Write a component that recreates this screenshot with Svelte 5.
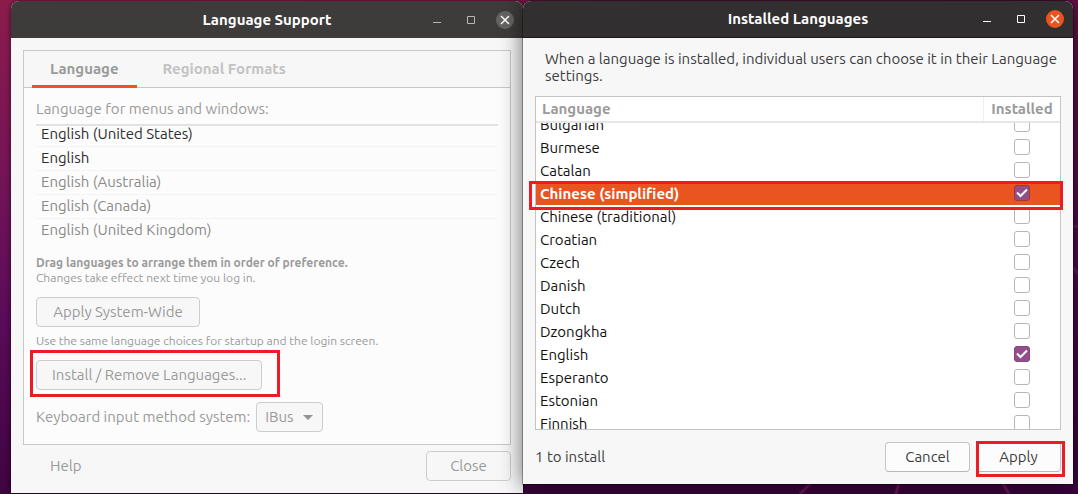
<script>
  import { onMount } from 'svelte';

  const preferred = [
    { name: 'English (United States)', active: true },
    { name: 'English', active: true },
    { name: 'English (Australia)', active: false },
    { name: 'English (Canada)', active: false },
    { name: 'English (United Kingdom)', active: false }
  ];

  let languages = $state([
    { name: 'Bulgarian', installed: false },
    { name: 'Burmese', installed: false },
    { name: 'Catalan', installed: false },
    { name: 'Chinese (simplified)', installed: true, selected: true },
    { name: 'Chinese (traditional)', installed: false },
    { name: 'Croatian', installed: false },
    { name: 'Czech', installed: false },
    { name: 'Danish', installed: false },
    { name: 'Dutch', installed: false },
    { name: 'Dzongkha', installed: false },
    { name: 'English', installed: true },
    { name: 'Esperanto', installed: false },
    { name: 'Estonian', installed: false },
    { name: 'Finnish', installed: false }
  ]);

  let body;
  onMount(() => {
    body.scrollTop = 10;
  });
</script>

{#snippet titlebar(title)}
  <header class="titlebar">
    <h1>{title}</h1>
    <div class="controls">
      <button class="ctl" aria-label="Minimize">
        <svg width="18" height="18" viewBox="0 0 18 18"><path d="M5 11.5h8" /></svg>
      </button>
      <button class="ctl" aria-label="Maximize">
        <svg width="18" height="18" viewBox="0 0 18 18"><path d="M5.500 5.500h7v7h-7z" /></svg>
      </button>
      <button class="ctl close" aria-label="Close window">
        <svg width="18" height="18" viewBox="0 0 18 18"><path d="M5 5l8 8M13 5l-8 8" /></svg>
      </button>
    </div>
  </header>
{/snippet}

<div class="desktop">
  <svg class="wallpaper" viewBox="0 0 1078 494" preserveAspectRatio="none" aria-hidden="true">
    <path d="M800 494l12-12M896 494l3-12M1009 494l-7-12M1072 227l6-1M1072 266l6 8" />
  </svg>
  <section class="window support">
    {@render titlebar('Language Support')}
    <div class="content">
      <div class="notebook">
        <nav class="tabs">
          <button class="tab current">Language</button>
          <button class="tab">Regional Formats</button>
        </nav>
        <div class="page">
          <p class="label">Language for menus and windows:</p>
          <ul class="preferred">
            {#each preferred as lang}
              <li class:active={lang.active}>{lang.name}</li>
            {/each}
          </ul>
          <p class="small"><b>Drag languages to arrange them in order of preference.</b><br />Changes take effect next time you log in.</p>
          <button class="btn wide">Apply System-Wide</button>
          <p class="small note">Use the same language choices for startup and the login screen.</p>
          <div class="marked install">
            <button class="btn">Install / Remove Languages...</button>
            <span class="mark"></span>
          </div>
          <div class="method">
            <label for="ime">Keyboard input method system:</label>
            <span class="combo">
              <select id="ime"><option>IBus</option></select>
              <svg width="10" height="5" viewBox="0 0 10 5" aria-hidden="true"><path d="M0 0h10L5 5z" /></svg>
            </span>
          </div>
        </div>
      </div>
      <footer class="actions">
        <button class="help">Help</button>
        <button class="btn">Close</button>
      </footer>
    </div>
  </section>

  <section class="window installed">
    {@render titlebar('Installed Languages')}
    <div class="content">
      <p class="intro">When a language is installed, individual users can choose it in their Language settings.</p>
      <div class="marked list">
        <table>
          <thead>
            <tr><th>Language</th><th>Installed</th></tr>
          </thead>
          <tbody bind:this={body}>
            {#each languages as lang}
              <tr class:selected={lang.selected}>
                <td>{lang.name}</td>
                <td><input type="checkbox" aria-label={lang.name} bind:checked={lang.installed} /></td>
              </tr>
            {/each}
          </tbody>
        </table>
        <span class="mark"></span>
      </div>
      <footer class="actions">
        <span class="status">1 to install</span>
        <button class="btn">Cancel</button>
        <div class="marked apply">
          <button class="btn">Apply</button>
          <span class="mark"></span>
        </div>
      </footer>
    </div>
  </section>
</div>

<style>
  :global(body) {
    margin: 0;
  }
  .desktop,
  .desktop * {
    box-sizing: border-box;
  }
  .desktop {
    position: relative;
    display: grid;
    grid-template-columns: 512fr 550fr;
    align-items: start;
    min-height: 100vh;
    padding: 1px 5px 1px 11px;
    overflow: hidden;
    background:
      linear-gradient(90deg, rgba(60, 2, 62, 0) 0%, rgba(60, 2, 62, 0.45) 100%),
      linear-gradient(180deg, #8a1c4b 0%, #741457 35%, #590b58 65%, #3e0440 100%);
    font-family: Ubuntu, "Noto Sans", sans-serif;
    font-size: 15px;
    line-height: 17px;
    color: #3d3d3d;
  }
  .wallpaper {
    position: absolute;
    width: 100%;
    height: 100%;
    fill: none;
    stroke: #6b1656;
    stroke-width: 3;
  }
  p,
  h1,
  ul {
    margin: 0;
    padding: 0;
  }
  button,
  select {
    font: inherit;
    color: inherit;
  }
  .window {
    position: relative;
    border-radius: 8px 8px 0 0;
    background: #f7f7f7;
    box-shadow: 0 0 5px rgba(0, 0, 0, 0.6);
  }
  .installed {
    box-shadow: 0 0 0 1px rgba(0, 0, 0, 0.3), 0 2px 22px rgba(0, 0, 0, 0.6);
  }
  .titlebar {
    display: grid;
    grid-template-columns: 1fr auto 1fr;
    align-items: center;
    height: 37px;
    padding: 0 9px;
    border-radius: 8px 8px 0 0;
    background: #3e3c3a;
    color: #fff;
  }
  .installed .titlebar {
    background: #312f2f;
    border-bottom: 1px solid #1c1b1b;
  }
  h1 {
    grid-column: 2;
    font-size: 15px;
    line-height: 18px;
    font-weight: 700;
  }
  .controls {
    display: flex;
    justify-content: flex-end;
    gap: 16px;
  }
  .ctl {
    display: block;
    width: 18px;
    height: 18px;
    padding: 0;
    border: 0;
    border-radius: 50%;
    background: none;
  }
  .ctl svg {
    display: block;
    fill: none;
    stroke: #b9b7b5;
  }
  .installed .ctl svg {
    stroke: #fff;
  }
  .close {
    background: #666462;
  }
  .close svg,
  .installed .close svg {
    stroke: #fff;
    stroke-width: 1.500;
  }
  .installed .close {
    background: #e95420;
  }
  .content {
    padding: 12px;
  }
  .support .content {
    color: #9a9a9a;
  }
  .notebook {
    border: 1px solid #c8c8c8;
    background: #fcfcfc;
  }
  .tabs {
    display: flex;
    gap: 8px;
    height: 37px;
    padding-left: 8px;
    border-bottom: 1px solid #c8c8c8;
    background: #f7f7f7;
  }
  .tab {
    height: 37px;
    padding: 1px 18px 0;
    border: 0;
    border-bottom: 3px solid transparent;
    background: none;
    font-weight: 700;
    color: #c3c3c3;
  }
  .current {
    border-color: #e95420;
    color: #9a9a9a;
  }
  .page {
    display: flex;
    flex-direction: column;
    align-items: flex-start;
    padding: 12px;
  }
  .preferred {
    align-self: stretch;
    margin: 7px 0 12px;
    border-top: 2px solid #e2e2e2;
    list-style: none;
  }
  .preferred li {
    height: 24px;
    padding: 2px 5px;
    border-bottom: 1px solid #f4f4f4;
    color: #8a8a8a;
  }
  .preferred li:first-child {
    height: 21px;
    padding-top: 0;
    line-height: 15px;
  }
  .preferred li:last-child {
    border-bottom-color: transparent;
  }
  .preferred .active {
    color: #2e2e2e;
  }
  .small {
    font-size: 12px;
    line-height: 15px;
  }
  .btn {
    display: block;
    height: 30px;
    min-width: 85px;
    padding: 0 15px 2px;
    border: 1px solid #cdcdcd;
    border-radius: 4px;
    background: #f7f7f7;
  }
  .installed .btn {
    border-color: #c4c4c4;
    border-bottom-color: #b8b8b8;
    background: #fcfcfc;
  }
  .wide {
    min-width: 164px;
    margin-top: 12px;
  }
  .note {
    margin: 6px 0 12px;
  }
  .marked {
    position: relative;
  }
  .mark {
    position: absolute;
    border: 3px solid #ed1c24;
    pointer-events: none;
  }
  .install .mark {
    inset: -10px -18px -7px -6px;
  }
  .list .mark {
    top: 85px;
    left: -6px;
    right: -2px;
    height: 29px;
  }
  .apply .mark {
    inset: -1px -4px -5px 0;
  }
  .method {
    display: flex;
    align-items: center;
    gap: 6px;
    margin-top: 12px;
  }
  .method label {
    padding-bottom: 2px;
  }
  .combo {
    position: relative;
    display: block;
  }
  select {
    appearance: none;
    display: block;
    width: 67px;
    height: 30px;
    padding: 0 8px 2px;
    border: 1px solid #cdcdcd;
    border-radius: 4px;
    background: #f7f7f7;
  }
  .combo svg {
    position: absolute;
    right: 10px;
    top: 13px;
    fill: #929292;
    pointer-events: none;
  }
  .actions {
    display: flex;
    align-items: center;
    justify-content: space-between;
    margin-top: 6px;
  }
  .help {
    padding: 0 27px 2px;
    border: 0;
    background: none;
  }
  .intro {
    padding-left: 10px;
  }
  .list {
    margin-top: 12px;
  }
  table {
    display: block;
    border: 1px solid #c4c4c4;
    background: #fff;
    color: #111;
  }
  thead,
  tbody {
    display: block;
  }
  thead {
    border-bottom: 2px solid #e6e6e6;
  }
  tbody {
    height: 306px;
    overflow-y: auto;
    scrollbar-width: none;
  }
  tr {
    display: grid;
    grid-template-columns: 1fr 77px;
    height: 23px;
  }
  thead tr {
    height: 24px;
  }
  th {
    padding: 3px 6px 4px;
    font-weight: 700;
    text-align: left;
    color: #9a9a9a;
  }
  th + th {
    border-left: 1px solid #efefef;
    padding: 3px 0 4px;
    text-align: center;
  }
  td {
    padding: 3px 4px 0;
  }
  td + td {
    display: flex;
    justify-content: center;
  }
  .selected {
    background: #e95420;
    color: #fff;
    font-weight: 700;
  }
  input {
    appearance: none;
    width: 16px;
    height: 16px;
    margin: 0;
    border: 1px solid #b6b6b6;
    border-radius: 3px;
    background: #fff;
  }
  input:checked {
    border-color: #87467f;
    background: #924d8b url("data:image/svg+xml,%3Csvg xmlns='http://www.w3.org/2000/svg' viewBox='0 0 14 14'%3E%3Cpath d='M2 6.500L5.500 10L12 3.500' fill='none' stroke='white' stroke-width='2'/%3E%3C/svg%3E") center / 14px no-repeat;
  }
  .selected input:checked {
    border-color: #a03a2c;
  }
  .installed .actions {
    gap: 6px;
    margin-top: 12px;
  }
  .status {
    margin-right: auto;
    padding-bottom: 2px;
  }
</style>
